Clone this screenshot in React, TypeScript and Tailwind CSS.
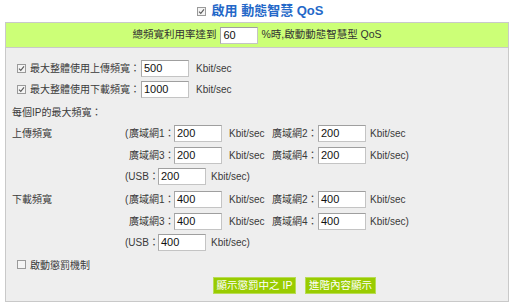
import React from "react";

const font = { fontFamily: '"Liberation Sans", "Noto Sans CJK TC", sans-serif' };

function Check({ checked = true }: { checked?: boolean }) {
  return (
    <span className="inline-flex h-[9px] w-[9px] shrink-0 items-center justify-center border border-[#9a9a9a] bg-[#f4f4f4]">
      {checked && (
        <svg width="7" height="7" viewBox="0 0 7 7">
          <path d="M1 3.6 L2.8 5.4 L6 1.4" fill="none" stroke="#5a5a5a" strokeWidth="1.1" />
        </svg>
      )}
    </span>
  );
}

function Field({ value, w = "w-[48px]" }: { value: string; w?: string }) {
  return (
    <span
      className={`${w} inline-flex h-[17px] shrink-0 items-center border border-[#c4c4c4] border-t-[#9f9f9f] border-l-[#a8a8a8] bg-white pl-[2px] text-[11px] text-[#111]`}
    >
      {value}
    </span>
  );
}

function WanRow({ a, b, first, last, va, vb }: { a: string; b: string; first: boolean; last: boolean; va: string; vb: string }) {
  return (
    <div className="flex h-[22px] items-center">
      <span className="flex w-[49px] shrink-0">
        <span className="w-[4px] shrink-0">{first ? "(" : ""}</span>
        <span>{a}：</span>
      </span>
      <Field value={va} />
      <span className="ml-[7px] w-[43px] shrink-0">Kbit/sec</span>
      <span className="w-[46px] shrink-0">{b}：</span>
      <Field value={vb} />
      <span className="ml-[4px]">{last ? "Kbit/sec)" : "Kbit/sec"}</span>
    </div>
  );
}

function Group({ label, v }: { label: string; v: string }) {
  return (
    <div className="flex">
      <div className="flex h-[22px] w-[113px] shrink-0 items-center">{label}</div>
      <div className="flex flex-col">
        <WanRow a="廣域網1" b="廣域網2" first last={false} va={v} vb={v} />
        <WanRow a="廣域網3" b="廣域網4" first={false} last va={v} vb={v} />
        <div className="flex h-[21px] items-center">
          <span className="w-[33px] shrink-0">(USB：</span>
          <Field value={v} />
          <span className="ml-[5px]">Kbit/sec)</span>
        </div>
      </div>
    </div>
  );
}

export default function App() {
  return (
    <div className="h-[305px] w-[514px] whitespace-nowrap bg-white text-[10px] text-[#3a3a3a]" style={font}>
      <div className="flex h-[22px] items-center justify-center pl-[6px]">
        <Check />
        <span className="ml-[6px] text-[13px] font-bold text-[#2468c8]">啟用 動態智慧 QoS</span>
      </div>
      <div className="mx-[5px] border border-[#c9c9c9]">
        <div className="flex h-[25px] items-center justify-center border-b border-[#c9c9c9] bg-[#ccff77] text-[10.5px] text-[#333]">
          <span>總頻寬利用率達到</span>
          <span className="ml-[4px]">
            <Field value="60" w="w-[38px]" />
          </span>
          <span className="ml-[3px]">%時,啟動動態智慧型 QoS</span>
        </div>
        <div className="flex h-[253px] flex-col bg-[#eeeeee] pl-[6px] pt-[10px]">
          <div className="flex h-[21px] items-center">
            <span className="ml-[5px]"><Check /></span>
            <span className="ml-[4px] w-[111px] shrink-0">最大整體使用上傳頻寬：</span>
            <Field value="500" />
            <span className="ml-[7px]">Kbit/sec</span>
          </div>
          <div className="flex h-[21px] items-center">
            <span className="ml-[5px]"><Check /></span>
            <span className="ml-[4px] w-[111px] shrink-0">最大整體使用下載頻寬：</span>
            <Field value="1000" />
            <span className="ml-[7px]">Kbit/sec</span>
          </div>
          <div className="mt-[3px] flex h-[19px] items-center">每個IP的最大頻寬：</div>
          <Group label="上傳頻寬" v="200" />
          <div className="h-[1px]" />
          <Group label="下載頻寬" v="400" />
          <div className="mt-[1px] flex h-[22px] items-center">
            <span className="ml-[5px]"><Check checked={false} /></span>
            <span className="ml-[4px]">啟動懲罰機制</span>
          </div>
          <div className="mt-[1px] flex h-[17px] items-center pl-[201px]">
            <span className="flex h-[17px] w-[83px] items-center justify-center border border-[#b8dc55] bg-[#99cc00] text-[10.5px] text-white">顯示懲罰中之 IP</span>
            <span className="ml-[9px] flex h-[17px] w-[71px] items-center justify-center border border-[#b8dc55] bg-[#99cc00] text-[10.5px] text-white">進階內容顯示</span>
          </div>
        </div>
      </div>
    </div>
  );
}
